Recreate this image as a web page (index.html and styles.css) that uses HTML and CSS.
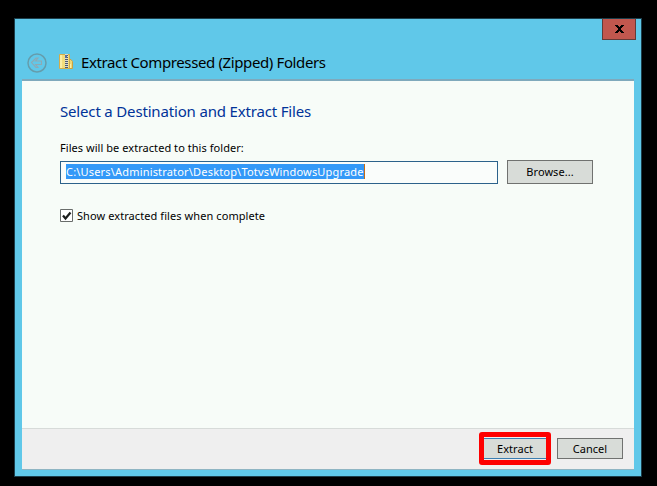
FILE: index.html
```html
<!DOCTYPE html>
<html lang="en">

<head>
  <meta charset="utf-8">
  <title>Extract Compressed (Zipped) Folders</title>
  <link rel="stylesheet" href="styles.css">
</head>

<body>
  <div class="window">
    <div class="titlebar">
      <button class="close" type="button" aria-label="Close">
        <svg width="9" height="8" viewBox="0 0 9 8" shape-rendering="crispEdges">
          <path d="M0 0h3v1h1v1h1V1h1V0h3v1H8v1H7v1H6v2h1v1h1v1h1v1H6V7H5V6H4v1H3v1H0V7h1V6h1V5h1V3H2V2H1V1H0z" />
        </svg>
      </button>
    </div>
    <div class="header">
      <svg class="back" width="20" height="20" viewBox="0 0 20 20">
        <circle cx="10" cy="10" r="9" />
        <path d="M4.500 9.500L9 5h2L8.500 8h6v3.500h-6L11 14.500H9z" />
      </svg>
      <svg class="zip" width="15" height="17" viewBox="0 0 15 17">
        <path d="M9.500 6.500h2.500l1.500 2v7H9.500z" fill="#f0d777" stroke="#c9a244" />
        <path d="M.5 1.500h10v14H.5z" fill="#f3dd7c" stroke="#d2ad4c" />
        <path d="M1 2h2v13H1z" fill="#fbeea4" />
        <path d="M6 1h3v14H6z" fill="#dedccb" />
        <path d="M7.500 2v13" stroke="#4d5a70" stroke-width="3" stroke-dasharray="1 1" />
        <path d="M6 2h2v3H6z" fill="#5a6e9c" />
        <path d="M11.500 11v4" stroke="#fff0a5" />
      </svg>
      <span class="name">Extract Compressed (Zipped) Folders</span>
    </div>
    <form class="panel" action="javascript:void+0">
      <div class="content">
        <h1>Select a Destination and Extract Files</h1>
        <div class="label">Files will be extracted to this folder:</div>
        <div class="row">
          <div class="path"><span class="selected">C:\Users\Administrator\Desktop\TotvsWindowsUpgrade</span></div>
          <button class="btn browse" type="button">Browse...</button>
        </div>
        <div class="check">
          <svg width="13" height="13" viewBox="0 0 13 13">
            <path d="M.5.5h12v12H.5z" fill="#fff" stroke="#696d6b" />
            <path d="M3 6.500l2.500 3L10.500 3.500" fill="none" stroke="#1b1d1c" stroke-width="2.200" />
          </svg>
          <span>Show extracted files when complete</span>
        </div>
      </div>
      <div class="footer">
        <div class="highlight">
          <button class="btn extract" type="submit">Extract</button>
        </div>
        <button class="btn cancel" type="button">Cancel</button>
      </div>
    </form>
  </div>
</body>

</html>
```

FILE: styles.css
```css
body {
  margin: 0;
  padding: 18px 0 0 14px;
  background: #000;
  color: #000;
  font-family: "Noto Sans", "Open Sans", sans-serif;
  font-size: 11px;
  letter-spacing: .05px;
}

.window {
  box-sizing: border-box;
  width: 628px;
  height: 459px;
  padding: 0 7px;
  border: 1px solid #1c3e4b;
  background: #60c8e9;
}

.titlebar {
  display: flex;
  justify-content: flex-end;
  height: 26px;
  margin-right: -2px;
}

.close {
  box-sizing: border-box;
  width: 34px;
  height: 22px;
  margin-top: -1px;
  padding: 0;
  border: 1px solid #633b38;
  border-top-color: #1c3e4b;
  background: #c1574e;
  line-height: 0;
}

.header {
  display: flex;
  align-items: center;
  height: 34px;
  padding-left: 5px;
}

.back {
  margin-top: 1px;
  fill: none;
  stroke: #659dac;
  stroke-width: 1.5;
}

.back path {
  stroke: #8fa9b3;
  stroke-width: 1.1;
}

.zip {
  margin: -1px 0 0 12px;
}

.name {
  margin: 0 0 0 7px;
  font-size: 15px;
  line-height: 20px;
  letter-spacing: -.38px;
  white-space: nowrap;
}

.panel {
  box-sizing: border-box;
  display: flex;
  flex-direction: column;
  width: 612px;
  height: 391px;
  border-top: 2px solid #7fa9bc;
  border-bottom: 1px solid #8fb5c3;
  background: #f7fcf8;
}

.content {
  flex: 1;
  padding: 20px 0 0 38px;
}

h1 {
  margin: 0;
  color: #003399;
  font-size: 15px;
  font-weight: 400;
  line-height: 20px;
  letter-spacing: -.17px;
  white-space: nowrap;
}

.label {
  margin-top: 19px;
  line-height: 16px;
  white-space: nowrap;
}

.row {
  display: flex;
  align-items: flex-end;
  gap: 9px;
  height: 24px;
  margin-top: 4px;
}

.path {
  box-sizing: border-box;
  width: 438px;
  height: 23px;
  padding: 2px 5px;
  border: 1px solid #2c628b;
  background: #fafdfb;
}

.selected {
  display: block;
  width: 298px;
  height: 15px;
  border-right: 1px solid #c46b15;
  background: #3399f8;
  color: #fff;
  line-height: 15px;
  letter-spacing: .18px;
  white-space: nowrap;
}

.btn {
  box-sizing: border-box;
  padding: 0 0 1px;
  border: 1px solid #707270;
  background: #d8dcd8;
  color: #000;
  font: inherit;
  letter-spacing: inherit;
}

.browse {
  width: 86px;
  height: 24px;
}

.check {
  display: flex;
  align-items: center;
  gap: 4px;
  height: 17px;
  margin-top: 23px;
  letter-spacing: .08px;
  white-space: nowrap;
}

.footer {
  box-sizing: border-box;
  display: flex;
  justify-content: flex-end;
  align-items: flex-start;
  gap: 6px;
  height: 41px;
  padding: 3px 11px 0 0;
  border-top: 1px solid #d7dbd9;
  background: #efefef;
}

.highlight {
  box-sizing: border-box;
  width: 72px;
  height: 33px;
  padding-top: 1px;
  border: 5px solid #fe0000;
  border-radius: 3px;
}

.extract {
  display: block;
  width: 62px;
  height: 21px;
  border-width: 1px 0;
  border-color: #3c7fb1;
}

.cancel {
  width: 66px;
  height: 21px;
  margin-top: 6px;
}
```
